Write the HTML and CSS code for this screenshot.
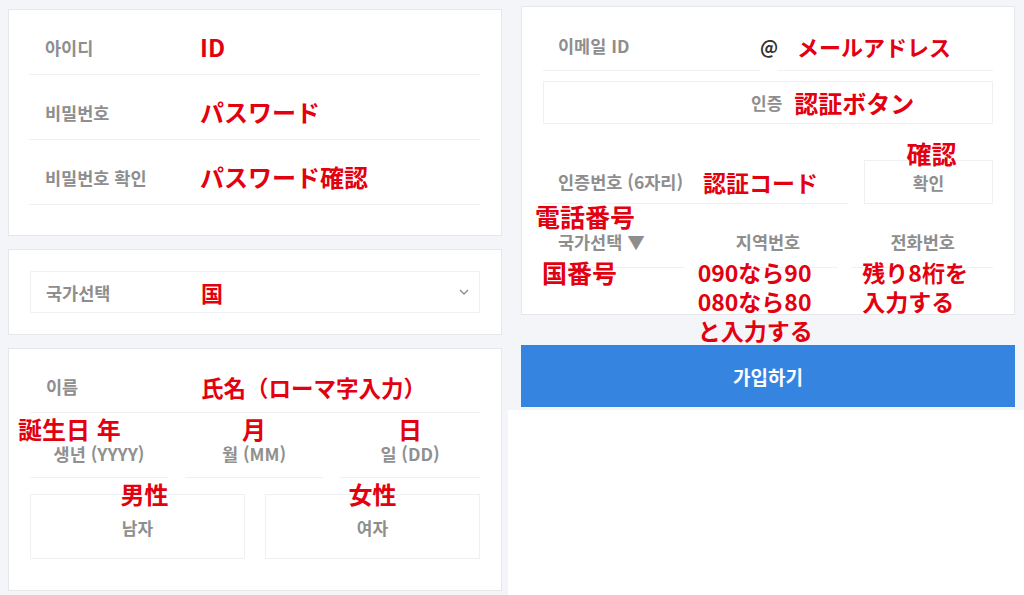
FILE: index.html
```html
<!DOCTYPE html>
<html lang="ko">
<head>
<meta charset="utf-8">
<title>회원가입</title>
<link rel="stylesheet" href="styles.css">
</head>
<body>
<div class="page">
  <div class="left">
    <section class="card card-account">
      <div class="row"><span class="label">아이디</span><span class="note">ID</span></div>
      <div class="row"><span class="label">비밀번호</span><span class="note">パスワード</span></div>
      <div class="row"><span class="label">비밀번호 확인</span><span class="note">パスワード確認</span></div>
    </section>

    <section class="card card-country">
      <div class="select">
        <span class="label">국가선택</span><span class="note note-country">国</span>
        <svg class="chev" width="10" height="6" viewBox="0 0 10 6"><path d="M1 1 L5 5 L9 1" fill="none" stroke="#8c8c8c" stroke-width="1.3"/></svg>
      </div>
    </section>

    <section class="card card-profile">
      <div class="row row-name"><span class="label">이름</span><span class="note note-name">氏名（ローマ字入力）</span></div>
      <div class="birth">
        <div class="bcol"><span class="note bnote bnote-year">誕生日 年</span><span class="blabel">생년 (YYYY)</span></div>
        <div class="bcol"><span class="note bnote">月</span><span class="blabel">월 (MM)</span></div>
        <div class="bcol"><span class="note bnote">日</span><span class="blabel">일 (DD)</span></div>
      </div>
      <div class="gender">
        <div class="gbox"><span class="note gnote gnote-m">男性</span><span class="glabel">남자</span></div>
        <div class="gbox"><span class="note gnote">女性</span><span class="glabel">여자</span></div>
      </div>
    </section>
  </div>

  <div class="right">
    <div class="right-top">
      <section class="card card-join">
        <div class="email">
          <div class="field field-id"><span class="label">이메일 ID</span></div>
          <span class="at">@</span>
          <div class="field field-domain"><span class="note note-mail">メールアドレス</span></div>
        </div>
        <div class="verify-btn"><span class="label label-sm">인증</span><span class="note">認証ボタン</span></div>
        <div class="code">
          <div class="field field-code"><span class="label">인증번호 (6자리)</span><span class="note note-code">認証コード</span></div>
          <div class="confirm"><span class="note confirm-note">確認</span><span class="label label-sm">확인</span></div>
        </div>
        <div class="note phone-note">電話番号</div>
        <div class="phone">
          <div class="pcol pcol-country">국가선택 ▼</div>
          <div class="pcol">지역번호</div>
          <div class="pcol">전화번호</div>
        </div>
        <div class="phone-notes">
          <div class="note pnote pnote-country">国番号</div>
          <div class="note pnote">090なら90<br>080なら80<br>と入力する</div>
          <div class="note pnote pnote-number">残り8桁を<br>入力する</div>
        </div>
      </section>
      <button class="submit">가입하기</button>
    </div>
  </div>
</div>
</body>
</html>
```

FILE: styles.css
```css
* { box-sizing: border-box; }
html, body { margin: 0; padding: 0; }
body {
  width: 1024px;
  height: 595px;
  overflow: hidden;
  background: #ffffff;
  font-family: "Noto Sans CJK KR", "Noto Sans", sans-serif;
}
.page { display: flex; width: 1024px; height: 595px; }

.left {
  width: 508px;
  height: 595px;
  background: #f4f5f8;
  padding: 9px 0 0 8px;
  display: flex;
  flex-direction: column;
  gap: 13px;
}
.card {
  width: 494px;
  background: #ffffff;
  border: 1px solid #e5e7eb;
  position: relative;
}
.label {
  color: #8e8e8e;
  font-size: 17.5px;
  font-weight: 700;
  white-space: nowrap;
}
.label-sm { font-size: 17px; }
.note {
  color: #e3000f;
  font-family: "Noto Sans CJK JP", "Noto Sans", sans-serif;
  font-weight: 700;
  font-size: 24px;
  line-height: 28px;
  white-space: nowrap;
}

/* account card */
.card-account { height: 227px; padding: 0 21px 0 20px; }
.row {
  height: 65px;
  padding-top: 10px;
  border-bottom: 1px solid #eef0f2;
  display: flex;
  align-items: center;
}
.row .label { width: 171px; padding-left: 16px; }

/* country card */
.card-country { height: 86px; padding: 21px 21px 0 21px; }
.select {
  height: 42px;
  border: 1px solid #eef0f2;
  display: flex;
  align-items: center;
  padding: 0 10px 0 15px;
}
.select .label { width: 155px; }
.note-country { font-size: 22px; }
.chev { margin-left: auto; }

/* profile card */
.card-profile { height: 243px; padding: 0 21px 0 21px; }
.row-name { height: 64px; padding-top: 12px; }
.row-name .label { width: 171px; }
.note-name { font-size: 22.5px; }
.birth {
  display: grid;
  grid-template-columns: 138px 138px 140px;
  justify-content: space-between;
}
.bcol {
  height: 65px;
  border-bottom: 1px solid #eef0f2;
  padding-top: 2px;
  display: flex;
  flex-direction: column;
  align-items: center;
}
.bnote { line-height: 28px; }
.bnote-year { align-self: flex-start; margin-left: -12px; }
.blabel {
  color: #909090;
  font-size: 17.5px;
  font-weight: 700;
  line-height: 22px;
  white-space: nowrap;
}
.gender {
  display: grid;
  grid-template-columns: 215px 215px;
  justify-content: space-between;
  margin-top: 16px;
}
.gbox {
  position: relative;
  height: 65px;
  border: 1px solid #eef0f2;
  display: flex;
  align-items: center;
  justify-content: center;
  padding-top: 2px;
}
.glabel { color: #8e8e8e; font-size: 17px; font-weight: 700; }
.gnote {
  position: absolute;
  top: -15px;
  left: 50%;
  transform: translateX(-50%);
}
.gnote-m { margin-left: 7px; }

/* right side */
.right { width: 516px; height: 595px; background: #ffffff; }
.right-top {
  height: 410px;
  background: #f4f5f8;
  padding: 6px 9px 0 13px;
}
.card-join { height: 309px; padding: 0 21px; }
.email { display: flex; height: 64px; }
.field {
  border-bottom: 1px solid #eef0f2;
  display: flex;
  align-items: center;
}
.email .field { height: 64px; padding-top: 14px; }
.field-id { width: 217px; padding-left: 15px; }
.at {
  width: 18px;
  padding-top: 14px;
  display: flex;
  align-items: center;
  justify-content: center;
  color: #333333;
  font-size: 18px;
  font-weight: 700;
}
.field-domain { flex: 1; padding-left: 19px; }
.note-mail { font-size: 22px; }
.verify-btn {
  margin-top: 10px;
  height: 43px;
  border: 1px solid #eef0f2;
  display: flex;
  align-items: center;
  padding-left: 207px;
  gap: 12px;
}
.code {
  margin-top: 36px;
  display: flex;
  gap: 16px;
  height: 44px;
}
.field-code {
  width: 305px;
  height: 44px;
  padding-left: 15px;
  gap: 20px;
}
.note-code { font-size: 23px; }
.confirm {
  position: relative;
  flex: 1;
  height: 44px;
  border: 1px solid #eef0f2;
  display: flex;
  align-items: center;
  justify-content: center;
}
.confirm-note {
  position: absolute;
  top: -22px;
  left: 50%;
  transform: translateX(-50%);
  margin-left: 3px;
  font-size: 25px;
}
.phone-note { margin-left: -8px; line-height: 24px; font-size: 25px; }
.phone {
  display: grid;
  grid-template-columns: repeat(3, 1fr);
  gap: 14px;
}
.pcol {
  height: 40px;
  padding-top: 3px;
  border-bottom: 1px solid #eef0f2;
  text-align: center;
  color: #8e8e8e;
  font-size: 17.5px;
  font-weight: 700;
  line-height: 22px;
  white-space: nowrap;
}
.pcol-country { padding-right: 24px; }
.phone-notes {
  display: grid;
  grid-template-columns: repeat(3, 1fr);
  gap: 14px;
  margin-top: -10px;
}
.pnote { line-height: 29px; font-size: 23px; }
.pnote-country { margin-left: -1px; font-size: 25px; }
.pnote-number { padding-left: 10px; }

.submit {
  display: flex;
  align-items: center;
  justify-content: center;
  margin-top: 30px;
  width: 494px;
  height: 62px;
  border: none;
  background: #3584e0;
  color: #ffffff;
  font-family: "Noto Sans CJK KR", "Noto Sans", sans-serif;
  font-size: 19px;
  font-weight: 700;
  padding: 0;
}
```
